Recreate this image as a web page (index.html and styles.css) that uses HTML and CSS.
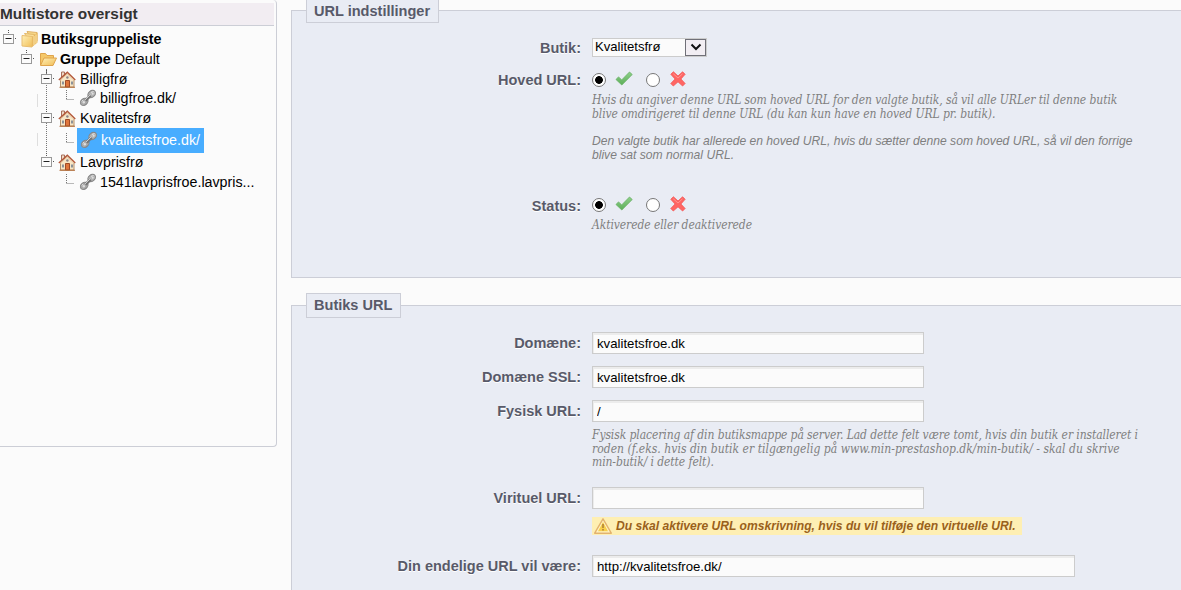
FILE: index.html
```html
<!DOCTYPE html>
<html lang="da">
<head>
  <meta charset="UTF-8">
  <title>Multistore</title>
  <link rel="stylesheet" href="styles.css">
</head>
<body>

<!-- shared icons -->
<svg class="defs" width="0" height="0">
  <linearGradient id="gold" x1="0" y1="0" x2="1" y2="1">
    <stop offset="0" stop-color="#fff0b8"/><stop offset="1" stop-color="#f0bd55"/>
  </linearGradient>
  <linearGradient id="green" x1="0" y1="0" x2="0" y2="1">
    <stop offset="0" stop-color="#8fd08a"/><stop offset="1" stop-color="#5cae58"/>
  </linearGradient>
  <symbol id="minus" viewBox="0 0 14 20">
    <path d="M5.5 1v1M5.5 3v1M12 9.5h1" stroke="#555"/>
    <rect x=".5" y="5.5" width="10" height="9" fill="#fbfbfb" stroke="#999"/>
    <path d="M2.5 9.5h6" stroke="#222"/>
  </symbol>
  <symbol id="corner" viewBox="0 0 9 20">
    <path d="M.5 2v10M.5 11.5h8" fill="none" stroke="#777" stroke-dasharray="1 1"/>
  </symbol>
  <symbol id="house" viewBox="0 0 18 18">
    <path d="M3.5 2h3v6h-3z" fill="#f0dcc8" stroke="#a8705c"/>
    <path d="M2.5 9L9.5 3l6.5 6v8H2.5z" fill="#f7e6c6" stroke="#b5906a"/>
    <path d="M.8 10L9.3 2.2l8 7.8" fill="none" stroke="#b4583a" stroke-width="1.3"/>
    <path d="M2 10.5L9.3 4l7 6.5" fill="none" stroke="#e5c3a0"/>
    <path d="M7.5 10.5h4V17h-4z" fill="#e0763c" stroke="#a04a26"/>
    <path d="M4 11.5h2v3H4zM13 11.5h2v3h-2z" fill="#8b9299"/>
    <circle cx="9.4" cy="7.5" r="1.2" fill="#8b8588"/>
    <path d="M1.5 17.3h15.5" stroke="#b5713f"/>
  </symbol>
  <symbol id="link" viewBox="0 0 18 18">
    <g stroke="#858585">
      <ellipse cx="12.7" cy="5" rx="4.200" ry="3.200" transform="rotate(-40 12.7 5)" fill="#b4b4b4"/>
      <ellipse cx="5.2" cy="12.8" rx="4.200" ry="3.200" transform="rotate(-40 5.2 12.8)" fill="#a9a9a9"/>
    </g>
    <path d="M6.500 11.500l5-5" stroke="#777" stroke-width="3"/>
    <path d="M5.800 11.200l5.600-5.600" stroke="#d0d0d0"/>
    <path d="M12 3.500l2.500-1M2.800 12.500l1.200-1.500" stroke="#e2e2e2"/>
    <circle cx="4.800" cy="13.300" r="1.200" fill="#dedede"/>
    <circle cx="13.700" cy="4.700" r="1" fill="#dedede"/>
  </symbol>
  <symbol id="check" viewBox="0 0 18 16">
    <path d="M1 8.5l2.5-2.6 3.2 3L14.500 1l2.700 2.500L6.800 14z" fill="url(#green)" stroke="#66b062" stroke-width=".8" stroke-linejoin="round"/>
  </symbol>
  <symbol id="cross" viewBox="0 0 16 16">
    <path d="M3.400 .8L8 5 12.600 .8l2.500 2.500L10.900 8l4.200 4.500-2.500 2.500L8 10.800 3.300 15 .8 12.500 5.100 8 .8 3.300z" fill="#ff6663" stroke="#f35453" stroke-width=".8" stroke-linejoin="round"/>
    <path d="M3.300 2.800L8 7l4.500-4.200" fill="none" stroke="#ff9592"/>
  </symbol>
</svg>

<div class="page">

  <div class="sidebar">
    <h3>Multistore oversigt</h3>
    <div class="tree">
      <div class="node root">
        <svg class="minus"><use href="#minus"/></svg>
        <svg class="ico" width="18" height="18" viewBox="0 0 18 18">
          <path d="M6 1.5l10 1V11l-3 3z" fill="#f8d98b" stroke="#e0b266"/>
          <path d="M3.5 3.5l10 1V13l-2 2z" fill="#fbe19c" stroke="#e3b868"/>
          <path d="M1 5.5l10.5 1-.5 10.500-10-1z" fill="url(#gold)" stroke="#e8bd70"/>
          <path d="M11.5 6.5l5-4v10L11 17z" fill="#e9b75c"/>
          <path d="M13 6v9M15 4.5v9" stroke="#fbe7ae"/>
        </svg>
        <b>Butiksgruppeliste</b>
      </div>
      <div class="node group">
        <svg class="minus"><use href="#minus"/></svg>
        <svg class="ico" width="18" height="18" viewBox="0 0 18 18">
          <path d="M1.5 15V3.5h5l1.5 2h6.5V8" fill="#f5c869" stroke="#dfa44c"/>
          <path d="M1.5 15.5L5 8h12.5L14 15.5z" fill="url(#gold)" stroke="#dfa44c" stroke-linejoin="round"/>
        </svg>
        <span><b>Gruppe</b> Default</span>
      </div>
      <div class="shops">
        <div class="node shop">
          <svg class="minus"><use href="#minus"/></svg>
          <svg class="ico" width="18" height="18"><use href="#house"/></svg>
          <span>Billigfrø</span>
        </div>
        <div class="node url">
          <svg class="corner"><use href="#corner"/></svg>
          <a class="item"><svg width="18" height="18"><use href="#link"/></svg>billigfroe.dk/</a>
        </div>
        <div class="node shop">
          <svg class="minus"><use href="#minus"/></svg>
          <svg class="ico" width="18" height="18"><use href="#house"/></svg>
          <span>Kvalitetsfrø</span>
        </div>
        <div class="node url active">
          <svg class="corner"><use href="#corner"/></svg>
          <a class="item"><svg width="18" height="18"><use href="#link"/></svg>kvalitetsfroe.dk/</a>
        </div>
      </div>
      <div class="node shop last">
        <svg class="minus"><use href="#minus"/></svg>
        <svg class="ico" width="18" height="18"><use href="#house"/></svg>
        <span>Lavprisfrø</span>
      </div>
      <div class="node url">
        <svg class="corner"><use href="#corner"/></svg>
        <a class="item"><svg width="18" height="18"><use href="#link"/></svg>1541lavprisfroe.lavpris...</a>
      </div>
    </div>
  </div>

  <form class="content">
    <fieldset class="settings">
      <legend>URL indstillinger</legend>
      <div class="row shop-row">
        <label>Butik:</label>
        <div class="select">
          <span>Kvalitetsfrø</span>
          <i><svg width="12" height="8" viewBox="0 0 12 8"><path d="M1.5 1.5L6 6l4.5-4.5" fill="none" stroke="#111" stroke-width="2"/></svg></i>
        </div>
      </div>
      <div class="row radios">
        <label>Hoved URL:</label>
        <span class="radio on"></span>
        <svg class="check"><use href="#check"/></svg>
        <span class="radio"></span>
        <svg class="cross"><use href="#cross"/></svg>
      </div>
      <p class="help">Hvis du angiver denne URL som hoved URL for den valgte butik, så vil alle URLer til denne butik<br>blive omdirigeret til denne URL (du kan kun have en hoved URL pr. butik).</p>
      <p class="note">Den valgte butik har allerede en hoved URL, hvis du sætter denne som hoved URL, så vil den forrige<br>blive sat som normal URL.</p>
      <div class="row radios status">
        <label>Status:</label>
        <span class="radio on"></span>
        <svg class="check"><use href="#check"/></svg>
        <span class="radio"></span>
        <svg class="cross"><use href="#cross"/></svg>
      </div>
      <p class="help">Aktiverede eller deaktiverede</p>
    </fieldset>

    <fieldset class="shop-url">
      <legend>Butiks URL</legend>
      <div class="row">
        <label>Domæne:</label>
        <input type="text" value="kvalitetsfroe.dk">
      </div>
      <div class="row">
        <label>Domæne SSL:</label>
        <input type="text" value="kvalitetsfroe.dk">
      </div>
      <div class="row">
        <label>Fysisk URL:</label>
        <input type="text" value="/">
      </div>
      <p class="help physical">Fysisk placering af din butiksmappe på server. Lad dette felt være tomt, hvis din butik er installeret i<br><span class="wide">roden (f.eks. hvis din butik er tilgængelig på www.min-prestashop.dk/min-butik/ - skal du skrive</span><br>min-butik/ i dette felt).</p>
      <div class="row virtual">
        <label>Virituel URL:</label>
        <input type="text" value="">
      </div>
      <div class="warning">
        <svg width="20" height="18" viewBox="0 0 20 18">
          <path d="M10 1.8L18.3 16.2H1.7z" fill="#fff3c4" stroke="#e3b36e" stroke-width="1.4" stroke-linejoin="round"/>
          <path d="M10 5l5 9.2H5z" fill="#f7cf4c"/>
          <path d="M10 7v4M10 12v1.5" stroke="#b98a3a" stroke-width="1.8"/>
        </svg>
        <span>Du skal aktivere URL omskrivning, hvis du vil tilføje den virtuelle URI.</span>
      </div>
      <div class="row final">
        <label>Din endelige URL vil være:</label>
        <input type="text" value="http://kvalitetsfroe.dk/">
      </div>
    </fieldset>
  </form>

</div>

</body>
</html>
```
FILE: styles.css
```css
body {
  margin: 0;
  height: 590px;
  overflow: hidden;
  background-color: #fbfbfb;
  font-family: Arial, "Liberation Sans", sans-serif;
  font-size: 14px;
  color: #000;
}

.defs {
  display: block;
}

.page {
  display: flex;
  align-items: flex-start;
}

/* left column */
.sidebar {
  width: 276px;
  height: 446px;
  flex: none;
  border-right: 1px solid #ccced6;
  border-bottom: 1px solid #ccced6;
  border-radius: 0 4px 4px 0;
}

.sidebar h3 {
  width: 274px;
  height: 22px;
  margin: 3px 0 0;
  line-height: 22px;
  font-size: 15.4px;
  color: #333;
  background-color: #f2edf2;
  border-bottom: 1px solid #ccced6;
}

.tree {
  padding-top: 3px;
  font-size: 14.25px;
}

.node {
  display: flex;
  align-items: center;
  height: 20px;
  box-sizing: border-box;
  white-space: nowrap;
}

.minus {
  width: 14px;
  height: 20px;
  flex: none;
}

.ico {
  margin: 0 2px 0 4px;
}

.root {
  padding-left: 3px;
}

.group {
  padding-left: 21px;
}

.group .ico {
  margin-right: 3px;
}

.shop {
  padding-left: 41px;
}

.shop .ico {
  margin: 0 4px 0 3px;
}

/* dotted line that joins the shops */
.shops {
  background: repeating-linear-gradient(to bottom, #777 0, #777 1px, transparent 1px, transparent 2px) 46px 0 / 1px 100% no-repeat;
}

.url {
  height: 19px;
  padding-left: 66px;
  padding-bottom: 1px;
}

.shops .url {
  background: linear-gradient(#dedede, #dedede) 37px 5px / 1px 13px no-repeat;
}

.corner {
  width: 9px;
  height: 20px;
}

.item {
  display: flex;
  align-items: center;
  padding-left: 4px;
}

.item svg {
  margin-right: 3px;
}

.url.active {
  height: 25px;
  padding-bottom: 0;
}

.active .corner {
  margin-right: 2px;
}

.active .item {
  height: 25px;
  padding: 0 4px 1px 3px;
  box-sizing: border-box;
  color: #fff;
  background-color: #48adff;
}

.last {
  height: 19px;
  padding-bottom: 1px;
}

.last + .url {
  height: 20px;
  padding-bottom: 0;
}

/* form */
.content {
  flex: 1;
  margin: -2px 0 0 14px;
}

fieldset {
  margin: 0;
  padding: 0;
  border: 1px solid #ccced7;
  border-right: none;
  background-color: #e9ecf4;
  box-sizing: border-box;
}

legend {
  height: 25px;
  margin-left: 14px;
  padding: 0 8px 0 7px;
  box-sizing: border-box;
  border: 1px solid #ccced7;
  background-color: #e9ecf4;
  color: #585a69;
  font-size: 14.55px;
  font-weight: bold;
  line-height: 22px;
}

.settings {
  height: 280px;
}

.settings legend {
  line-height: 24px;
}

.shop-url {
  height: 320px;
  margin-top: 15px;
}

.row {
  display: flex;
  align-items: center;
  height: 22px;
  margin-bottom: 12px;
}

.row label {
  width: 289px;
  margin-right: 11px;
  text-align: right;
  color: #585a69;
  font-size: 14.5px;
  font-weight: bold;
  text-shadow: 0 1px 0 #fff;
}

.shop-row {
  height: 20px;
  margin: 14px 0 12px;
}

.shop-row label,
.status label {
  padding-top: 2px;
}

.select {
  display: flex;
  width: 115px;
  height: 19px;
  box-sizing: border-box;
  border: 1px solid #ccc;
  background-color: #fbfbfb;
  font-size: 13.1px;
  line-height: 16px;
}

.select span {
  flex: 1;
  padding-left: 2px;
}

.select i {
  display: flex;
  align-items: center;
  justify-content: center;
  width: 21px;
  box-sizing: border-box;
  border: 1px solid #707078;
  background-color: #f2eef3;
}

.radios {
  margin-bottom: 2px;
}

.radio {
  width: 14px;
  height: 14px;
  box-sizing: border-box;
  border: 1px solid #777;
  border-radius: 50%;
  background-color: #fff;
}

.radio.on {
  background: radial-gradient(circle, #000 0, #000 3.5px, #fff 4.2px);
}

.check {
  width: 18px;
  height: 16px;
  margin: 0 13px 3px 9px;
}

.cross {
  width: 16px;
  height: 16px;
  margin: 0 0 3px 10px;
}

.help,
.note {
  margin: 0 0 0 300px;
  font-size: 12.12px;
  font-style: italic;
  line-height: 14px;
  color: #7f7f7f;
  white-space: nowrap;
}

.help {
  font-family: Georgia, "DejaVu Serif Condensed", "DejaVu Serif", serif;
  font-size: 12px;
  letter-spacing: -0.09px;
}

.note {
  margin-top: 13px;
}

.status {
  margin-top: 32px;
}

.shop-url legend {
  margin-bottom: 14px;
}

input {
  width: 332px;
  height: 22px;
  padding: 1px 4px 0;
  box-sizing: border-box;
  border: 1px solid #ccc;
  background-color: #fbfbfb;
  box-shadow: inset 1px 2px 0 #ececec;
  font-family: Arial, "Liberation Sans", sans-serif;
  font-size: 13.2px;
  color: #000;
}

.physical {
  margin-top: -5px;
  line-height: 13.5px;
}

.wide {
  letter-spacing: 0.03px;
}

.virtual {
  margin: 17px 0 8px;
}

.warning {
  display: flex;
  align-items: center;
  width: 430px;
  height: 18px;
  margin: 0 0 20px 300px;
  background-color: #feefb3;
  color: #9a611b;
  font-size: 12.12px;
  font-style: italic;
  font-weight: bold;
  white-space: nowrap;
}

.warning svg {
  margin: 0 3px 0 1px;
}

.final input {
  width: 483px;
}
```
